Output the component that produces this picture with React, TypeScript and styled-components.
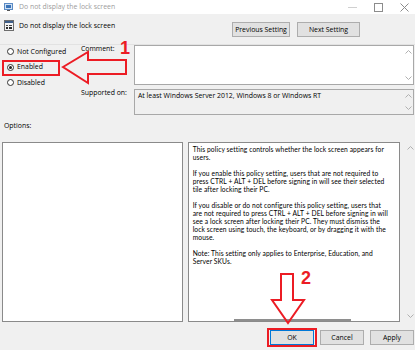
import styled, { createGlobalStyle } from 'styled-components'

const GlobalStyle = createGlobalStyle`
  html, body { margin: 0; padding: 0; background: #f0f0f0; }
  body { font-family: 'Open Sans', 'Noto Sans', sans-serif; }
  * { box-sizing: border-box; }
`

const RED = '#ec1c24'

const helpText = [
  ['This policy setting controls whether the lock screen appears for', 'users.'],
  [
    'If you enable this policy setting, users that are not required to',
    'press CTRL + ALT + DEL before signing in will see their selected',
    'tile after locking their PC.',
  ],
  [
    'If you disable or do not configure this policy setting, users that',
    'are not required to press CTRL + ALT + DEL before signing in will',
    'see a lock screen after locking their PC. They must dismiss the',
    'lock screen using touch, the keyboard, or by dragging it with the',
    'mouse.',
  ],
  ['Note: This setting only applies to Enterprise, Education, and', 'Server SKUs.'],
]

const radios = ['Not Configured', 'Enabled', 'Disabled']

function Chevron({ up }: { up?: boolean }) {
  return (
    <svg width="7" height="4" viewBox="0 0 7 4">
      <path
        d={up ? 'M0.5 3.5L3.5 0.5L6.5 3.5' : 'M0.5 0.5L3.5 3.5L6.5 0.5'}
        fill="none"
        stroke="#b0b0b0"
        strokeWidth="1"
      />
    </svg>
  )
}

function Scroll() {
  return (
    <ScrollCol>
      <Chevron up />
      <Chevron />
    </ScrollCol>
  )
}

export default function App() {
  return (
    <>
      <GlobalStyle />
      <Window>
        <TitleBar>
          <svg width="9" height="8" viewBox="0 0 9 8">
            <rect x="0.5" y="0.5" width="8" height="6" fill="#cfe0f3" stroke="#5b8bc4" />
            <rect x="2" y="2" width="5" height="3" fill="#3a73b8" />
            <rect x="3" y="7" width="3" height="1" fill="#555" />
          </svg>
          <TitleText>Do not display the lock screen</TitleText>
          <WinControls>
            <svg width="9" height="9" viewBox="0 0 9 9">
              <path d="M0 4.5H9" stroke="#d0d0d0" />
            </svg>
            <svg width="9" height="9" viewBox="0 0 9 9">
              <rect x="0.5" y="0.5" width="8" height="8" fill="none" stroke="#8c8c8c" />
            </svg>
            <svg width="9" height="9" viewBox="0 0 9 9">
              <path d="M0.5 0.5L8.5 8.5M8.5 0.5L0.5 8.5" stroke="#8c8c8c" />
            </svg>
          </WinControls>
        </TitleBar>

        <Header>
          <PolicyName>
            <svg width="10" height="11" viewBox="0 0 10 11">
              <rect x="0.5" y="0.5" width="9" height="10" fill="#f4f4f4" stroke="#6d6d6d" />
              <rect x="1" y="1" width="8" height="2" fill="#3f5f8a" />
              <rect x="2" y="5" width="2" height="1" fill="#444" />
              <rect x="5" y="5" width="3" height="1" fill="#444" />
              <rect x="2" y="7" width="2" height="2" fill="#2b2b2b" />
              <rect x="5" y="7" width="3" height="2" fill="#2b2b2b" />
            </svg>
            <span>Do not display the lock screen</span>
          </PolicyName>
          <Button $w={58}>Previous Setting</Button>
          <Button $w={63}>Next Setting</Button>
        </Header>

        <Settings>
          <RadioGroup>
            {radios.map((r) => (
              <RadioRow key={r}>
                <RadioDot $checked={r === 'Enabled'} />
                {r}
                {r === 'Enabled' && <Highlight />}
              </RadioRow>
            ))}
          </RadioGroup>
          <FieldLabel>Comment:</FieldLabel>
          <TextBox>
            <BoxText />
            <Scroll />
          </TextBox>
          <FieldLabel>Supported on:</FieldLabel>
          <TextBox $readOnly>
            <BoxText>At least Windows Server 2012, Windows 8 or Windows RT</BoxText>
            <Scroll />
          </TextBox>
        </Settings>

        <SectionLabel>Options:</SectionLabel>

        <Panels>
          <OptionsBox />
          <HelpBox>
            {helpText.map((para, i) => (
              <Para key={i}>
                {para.map((line) => (
                  <Line key={line}>{line}</Line>
                ))}
              </Para>
            ))}
            <HelpRule />
          </HelpBox>
          <Scroll />
        </Panels>

        <Footer>
          <Focused>
            <Button $w={44} $focus>
              OK
            </Button>
          </Focused>
          <Button $w={44}>Cancel</Button>
          <Button $w={44}>Apply</Button>
        </Footer>

        <Arrows width="415" height="350" viewBox="0 0 415 350">
          <polygon
            points="63,67 88,52 88,60 126,60 126,74 88,74 88,83"
            fill="none"
            stroke={RED}
            strokeWidth="2"
          />
          <polygon
            points="281,274 293,274 293,300 304,300 288,323 272,300 281,300"
            fill="none"
            stroke={RED}
            strokeWidth="2"
          />
        </Arrows>
        <StepNumber $x={120} $y={38}>
          1
        </StepNumber>
        <StepNumber $x={301} $y={268}>
          2
        </StepNumber>
      </Window>
    </>
  )
}

const Window = styled.div`
  position: relative;
  width: 415px;
  height: 350px;
  overflow: hidden;
  display: flex;
  flex-direction: column;
  background: #f0f0f0;
  color: #000;
  font-size: 6.9px;
  line-height: 8px;
`

const TitleBar = styled.div`
  height: 14px;
  flex: none;
  display: flex;
  align-items: center;
  padding: 0 6px 0 4px;
  background: #fff;
  color: #9c9c9c;
`

const TitleText = styled.span`
  margin-left: 6px;
`

const WinControls = styled.div`
  margin-left: auto;
  display: flex;
  align-items: center;
  gap: 17px;
`

const Header = styled.div`
  height: 31px;
  flex: none;
  display: flex;
  align-items: center;
  gap: 7px;
  padding: 0 55px 0 4px;
  border-bottom: 1px solid #e2e2e2;
`

const PolicyName = styled.div`
  align-self: flex-start;
  margin-top: 6px;
  margin-right: auto;
  display: flex;
  align-items: center;
  gap: 5px;
`

const Button = styled.button<{ $w: number; $focus?: boolean }>`
  width: ${(p) => p.$w}px;
  height: 15px;
  padding: 0;
  font: inherit;
  line-height: 13px;
  white-space: nowrap;
  color: #000;
  background: #e1e1e1;
  border: 1px solid ${(p) => (p.$focus ? '#0078d7' : '#adadad')};
`

const Settings = styled.div`
  flex: none;
  display: grid;
  grid-template-columns: 81px 53px 280px;
  grid-template-rows: 40px 26px;
  row-gap: 4px;
  height: 70px;
`

const RadioGroup = styled.div`
  grid-column: 1;
  grid-row: 1 / span 2;
  margin-top: -1px;
`

const RadioRow = styled.div`
  position: relative;
  height: 15.5px;
  display: flex;
  align-items: center;
  gap: 3px;
  padding-left: 7px;
`

const RadioDot = styled.span<{ $checked?: boolean }>`
  width: 7px;
  height: 7px;
  border-radius: 50%;
  border: 1px solid #333;
  background: #fff;
  display: flex;
  align-items: center;
  justify-content: center;
  &::after {
    content: '';
    width: 3px;
    height: 3px;
    border-radius: 50%;
    background: ${(p) => (p.$checked ? '#222' : 'transparent')};
  }
`

const Highlight = styled.span`
  position: absolute;
  left: 2px;
  top: 0;
  width: 58px;
  height: 16px;
  border: 2px solid ${RED};
`

const FieldLabel = styled.div`
  grid-column: 2;
  white-space: nowrap;
`

const TextBox = styled.div<{ $readOnly?: boolean }>`
  grid-column: 3;
  display: flex;
  border: 1px solid #a8a8a8;
  background: ${(p) => (p.$readOnly ? '#f0f0f0' : '#fff')};
`

const BoxText = styled.div`
  flex: 1;
  padding: 2px 3px;
`

const ScrollCol = styled.div`
  width: 10px;
  flex: none;
  display: flex;
  flex-direction: column;
  justify-content: space-between;
  align-items: center;
  padding: 4px 0;
`

const SectionLabel = styled.div`
  height: 27px;
  flex: none;
  padding: 7px 0 0 4px;
`

const Panels = styled.div`
  height: 180px;
  flex: none;
  display: flex;
  gap: 5px;
  padding-left: 2px;
`

const OptionsBox = styled.div`
  width: 183px;
  border: 1px solid #8a8a8a;
  background: #fff;
`

const HelpBox = styled.div`
  width: 215px;
  display: flex;
  flex-direction: column;
  gap: 8px;
  padding: 2px 0 0 4px;
  border: 1px solid #8a8a8a;
  background: #fff;
  font-family: Lato, 'Open Sans', sans-serif;
  font-size: 6.7px;
  letter-spacing: 0.1px;
`

const Para = styled.div``

const Line = styled.div`
  white-space: nowrap;
`

const HelpRule = styled.div`
  margin: auto 0 0 41px;
  width: 117px;
  height: 2px;
  background: #8e8e8e;
`

const Footer = styled.div`
  flex: 1;
  display: flex;
  justify-content: flex-end;
  gap: 6px;
  padding: 8px 1px 0 0;
`

const Focused = styled.span`
  position: relative;
  height: 15px;
  &::after {
    content: '';
    position: absolute;
    left: -3px;
    right: -3px;
    top: -2px;
    bottom: -2px;
    border: 2px solid ${RED};
  }
`

const Arrows = styled.svg`
  position: absolute;
  left: 0;
  top: 0;
  pointer-events: none;
`

const StepNumber = styled.span<{ $x: number; $y: number }>`
  position: absolute;
  left: ${(p) => p.$x}px;
  top: ${(p) => p.$y}px;
  font-family: 'Liberation Sans', Arial, sans-serif;
  font-weight: bold;
  font-size: 18px;
  line-height: 20px;
  color: ${RED};
`
